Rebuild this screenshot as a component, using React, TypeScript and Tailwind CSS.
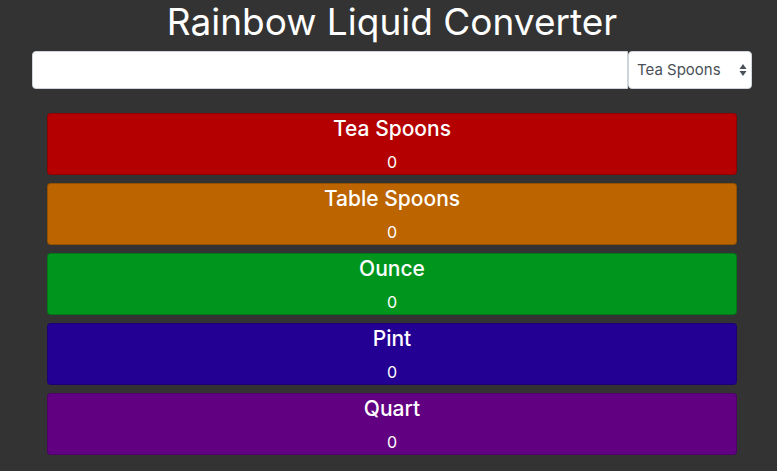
import { useState } from 'react';

const units = [
  { name: 'Tea Spoons', color: 'bg-[#b40000]' },
  { name: 'Table Spoons', color: 'bg-[#bb6400]' },
  { name: 'Ounce', color: 'bg-[#00961e]' },
  { name: 'Pint', color: 'bg-[#230093]' },
  { name: 'Quart', color: 'bg-[#620082]' },
];

export default function App() {
  const [value, setValue] = useState('');
  const [unit, setUnit] = useState('Tea Spoons');

  return (
    <div className="min-h-[471px] bg-[#333333] pl-[7px] font-['Inter',sans-serif] text-white">
      <div className="mx-auto flex w-[720px] flex-col items-center">
        <h1 className="h-[51px] text-[37px] leading-[44px]">Rainbow Liquid Converter</h1>
        <div className="flex h-[38px] w-full">
          <input
            value={value}
            onChange={(e) => setValue(e.target.value)}
            className="h-full w-[596px] rounded-l-[4px] border border-[#ced4da] bg-white px-3 text-[#495057] outline-none"
          />
          <div className="relative h-full w-[124px]">
            <select
              value={unit}
              onChange={(e) => setUnit(e.target.value)}
              className="h-full w-full appearance-none rounded-[4px] border border-[#ced4da] bg-white pl-2 text-[15px] text-[#495057] outline-none"
            >
              {units.map((u) => (
                <option key={u.name}>{u.name}</option>
              ))}
            </select>
            <svg className="pointer-events-none absolute right-[5px] top-[12px]" width="8" height="14" viewBox="0 0 8 14">
              <path d="M4 1 L7.5 6 L0.5 6 Z" fill="#495057" />
              <path d="M4 13 L7.5 8 L0.5 8 Z" fill="#495057" />
            </svg>
          </div>
        </div>
        <div className="mt-6 flex w-[690px] flex-col gap-2">
          {units.map((u) => (
            <div
              key={u.name}
              className={`${u.color} flex h-[62px] flex-col items-center rounded-[4px] border border-black/20`}
            >
              <div className="mt-[1px] text-[21px] font-medium leading-[28px]">{u.name}</div>
              <div className="mt-[7px] text-[16px] leading-[24px]">0</div>
            </div>
          ))}
        </div>
      </div>
    </div>
  );
}
